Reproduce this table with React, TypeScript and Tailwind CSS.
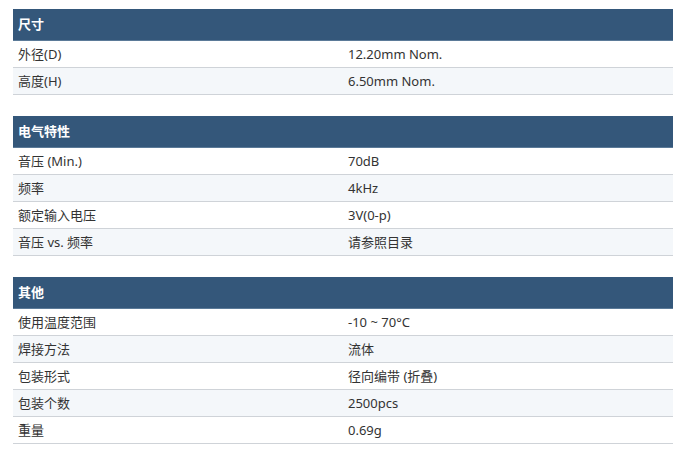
import React from 'react';

type Spec = { label: string; value: string };
type Section = { title: string; rows: Spec[] };

const sections: Section[] = [
  {
    title: '尺寸',
    rows: [
      { label: '外径(D)', value: '12.20mm Nom.' },
      { label: '高度(H)', value: '6.50mm Nom.' },
    ],
  },
  {
    title: '电气特性',
    rows: [
      { label: '音压 (Min.)', value: '70dB' },
      { label: '频率', value: '4kHz' },
      { label: '额定输入电压', value: '3V(0-p)' },
      { label: '音压 vs. 频率', value: '请参照目录' },
    ],
  },
  {
    title: '其他',
    rows: [
      { label: '使用温度范围', value: '-10 ~ 70°C' },
      { label: '焊接方法', value: '流体' },
      { label: '包装形式', value: '径向编带 (折叠)' },
      { label: '包装个数', value: '2500pcs' },
      { label: '重量', value: '0.69g' },
    ],
  },
];

function SpecTable({ section }: { section: Section }) {
  return (
    <div className="w-full">
      <div className="h-[32px] bg-[#34577a] border-b border-[#5b7a98] flex items-center px-[5px] text-white font-bold text-[13px]">
        {section.title}
      </div>
      {section.rows.map((row, i) => (
        <div
          key={row.label}
          className={`grid grid-cols-2 h-[27px] border-b border-[#cfd3d8] text-[13px] text-[#333] ${
            i % 2 === 1 ? 'bg-[#f4f7fa]' : 'bg-white'
          }`}
        >
          <div className="flex items-center px-[5px] pt-[2px]">{row.label}</div>
          <div className="flex items-center px-[5px] pt-[2px]">{row.value}</div>
        </div>
      ))}
    </div>
  );
}

export default function App() {
  return (
    <div
      className="w-[685px] h-[465px] bg-white pt-[9px] pl-[13px] pr-[12px]"
      style={{ fontFamily: '"Noto Sans", "Noto Sans CJK SC", sans-serif' }}
    >
      <div className="flex flex-col gap-[21px]">
        {sections.map((s) => (
          <SpecTable key={s.title} section={s} />
        ))}
      </div>
    </div>
  );
}
